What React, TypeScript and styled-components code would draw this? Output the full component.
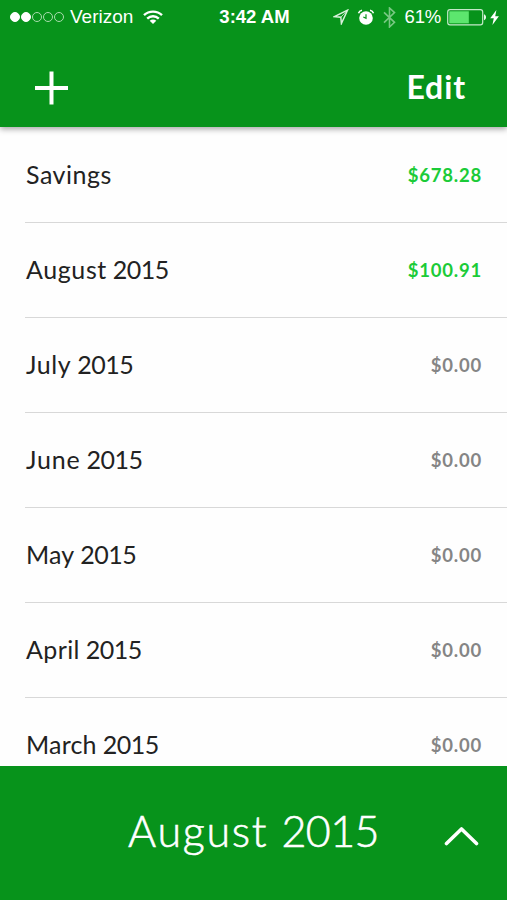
import React from "react";
import styled, { createGlobalStyle } from "styled-components";

const GREEN = "#07931b";

const GlobalStyle = createGlobalStyle`
  * { box-sizing: border-box; }
  body { margin: 0; background: #fff; }
`;

const Screen = styled.main`
  width: 507px;
  height: 900px;
  display: flex;
  flex-direction: column;
  overflow: hidden;
  background: #fefefe;
  font-family: Lato, "Noto Sans", sans-serif;
`;

const Header = styled.header`
  flex: none;
  height: 127px;
  display: flex;
  flex-direction: column;
  background: ${GREEN};
  color: #fff;
  z-index: 1;
  box-shadow: 0 2px 6px rgba(0, 0, 0, 0.36);
`;

const StatusBar = styled.div`
  height: 34px;
  display: grid;
  grid-template-columns: 1fr 74px 1fr;
  align-items: center;
  padding: 0 8px 0 10px;
  font-family: "Liberation Sans", Arial, sans-serif;
  font-size: 19px;
  line-height: 34px;
`;

const StatusGroup = styled.div<{ $end?: boolean }>`
  display: flex;
  align-items: center;
  justify-content: ${(p) => (p.$end ? "flex-end" : "flex-start")};
  white-space: nowrap;
`;

const Signal = styled.div`
  display: flex;
  gap: 1px;
  margin-right: 6px;
`;

const Dot = styled.i<{ $on: boolean }>`
  width: 10px;
  height: 10px;
  border-radius: 50%;
  border: 1px solid ${(p) => (p.$on ? "#fff" : "#a9dcae")};
  background: ${(p) => (p.$on ? "#fff" : "transparent")};
`;

const Carrier = styled.span`
  margin-right: 10px;
`;

const Clock = styled.time`
  font-size: 18.5px;
  font-weight: 700;
  text-align: center;
  white-space: nowrap;
`;

const Percent = styled.span`
  font-size: 18.5px;
  letter-spacing: -0.2px;
  margin: 0 6px 0 9px;
`;

const NavBar = styled.nav`
  height: 93px;
  display: flex;
  align-items: center;
  justify-content: space-between;
  padding: 14px 41px 0 34px;
`;

const PlainButton = styled.button`
  display: flex;
  border: 0;
  padding: 0;
  background: none;
  color: #fff;
  font: inherit;
`;

const EditButton = styled(PlainButton)`
  font-size: 32px;
  line-height: 36px;
  font-weight: 700;
  letter-spacing: 0.9px;
  padding-bottom: 2px;
`;

const List = styled.ul`
  flex: 1;
  min-height: 0;
  overflow: hidden;
  margin: 0;
  padding: 1px 0 0 25px;
  list-style: none;
`;

const Row = styled.li`
  height: 95px;
  display: flex;
  align-items: center;
  justify-content: space-between;
  padding: 0 25px 0 1px;
  border-bottom: 1px solid #d8d8d8;
`;

const Name = styled.span`
  padding-bottom: 3px;
  font-size: 25px;
  line-height: 32px;
  color: #222;
  white-space: nowrap;
`;

const Word = styled.span<{ $tracking: number }>`
  letter-spacing: ${(p) => p.$tracking}px;
`;

const Amount = styled.span<{ $positive: boolean }>`
  font-size: 18.5px;
  line-height: 24px;
  font-weight: 700;
  letter-spacing: 0.8px;
  color: ${(p) => (p.$positive ? "#1bcb38" : "#858585")};
`;

const Footer = styled.footer`
  flex: none;
  height: 134px;
  display: grid;
  grid-template-columns: 1fr auto 1fr;
  align-items: center;
  background: ${GREEN};
  color: #fff;
`;

const Current = styled.h1`
  grid-column: 2;
  margin: 0;
  padding-bottom: 4px;
  font-size: 43px;
  line-height: 52px;
  font-weight: 300;
  white-space: nowrap;
  -webkit-text-stroke: 0.6px #fff;
`;

const Expand = styled(PlainButton)`
  justify-self: end;
  padding: 6px 28px 0 0;
`;

const accounts = [
  { name: "Savings", year: "", amount: "$678.28", tracking: 0.5 },
  { name: "August", year: "2015", amount: "$100.91", tracking: 0.6 },
  { name: "July", year: "2015", amount: "$0.00", tracking: 0.6 },
  { name: "June", year: "2015", amount: "$0.00", tracking: 0.8 },
  { name: "May", year: "2015", amount: "$0.00", tracking: 0.2 },
  { name: "April", year: "2015", amount: "$0.00", tracking: 0.4 },
  { name: "March", year: "2015", amount: "$0.00", tracking: 0.2 },
];

const WifiIcon = () => (
  <svg width="20" height="15" viewBox="0 0 20 15" fill="none" stroke="#fff" strokeWidth="2.4">
    <path d="M1 5.2C6 .4 14 .4 19 5.2" />
    <path d="M4.2 8.6c3.3-3.1 8.3-3.1 11.6 0" />
    <path d="M10 14 6.7 10.8c1.9-1.6 4.7-1.6 6.6 0z" fill="#fff" stroke="none" />
  </svg>
);

const LocationIcon = () => (
  <svg width="16" height="16" viewBox="0 0 16 16" fill="none" stroke="#d9f1dc" strokeWidth="1.5" strokeLinejoin="miter">
    <path d="M14.5 1.2 1.5 7.6l6.3.7.6 6.2z" />
    <path d="M14.5 1.2 7.8 8.3" strokeWidth=".8" />
  </svg>
);

const AlarmIcon = () => (
  <svg width="18" height="17" viewBox="0 0 18 17" fill="none">
    <circle cx="9" cy="9" r="6.8" fill="#fff" />
    <path d="M1.5 4.2C2 2.5 3.2 1.5 5 1.2M16.5 4.2C16 2.5 14.8 1.5 13 1.2" stroke="#fff" strokeWidth="1.5" />
    <path d="M9 5.2v4.1L6.3 8" stroke={GREEN} strokeWidth="1.2" />
  </svg>
);

const BluetoothIcon = () => (
  <svg width="13" height="21" viewBox="0 0 13 21" fill="none" stroke="#79c883" strokeWidth="1.6">
    <path d="m1 5.3 10.5 10L6.5 20V1l5 4.6L1 15.6" />
  </svg>
);

const BatteryIcon = () => (
  <svg width="40" height="17" viewBox="0 0 40 17">
    <rect x=".7" y=".7" width="35" height="15.2" rx="2.3" fill="none" stroke="#c5e9c9" strokeWidth="1.2" />
    <rect x="2.3" y="2.3" width="19.5" height="12" fill="#5ce66e" />
    <path d="M37 5.2c2.7.8 2.7 5.2 0 6z" fill="#e9f8ea" />
  </svg>
);

const BoltIcon = () => (
  <svg width="9" height="15" viewBox="0 0 9 15" fill="#fff">
    <path d="M6.4 0 .2 8.2h3.6L2.4 15 8.9 6.3H5.2z" />
  </svg>
);

const Gap = styled.span<{ $w: number }>`
  flex: none;
  width: ${(p) => p.$w}px;
`;

export default function App() {
  return (
    <>
      <GlobalStyle />
      <Screen>
        <Header>
          <StatusBar>
            <StatusGroup>
              <Signal>
                {[true, true, false, false, false].map((on, i) => (
                  <Dot key={i} $on={on} />
                ))}
              </Signal>
              <Carrier>Verizon</Carrier>
              <WifiIcon />
            </StatusGroup>
            <Clock>3:42 AM</Clock>
            <StatusGroup $end>
              <LocationIcon />
              <Gap $w={8} />
              <AlarmIcon />
              <Gap $w={8} />
              <BluetoothIcon />
              <Percent>61%</Percent>
              <BatteryIcon />
              <Gap $w={3} />
              <BoltIcon />
            </StatusGroup>
          </StatusBar>
          <NavBar>
            <PlainButton aria-label="Add">
              <svg width="34" height="34" viewBox="0 0 34 34" stroke="#fff" strokeWidth="4">
                <path d="M1 17h33M17.5 .5v33" />
              </svg>
            </PlainButton>
            <EditButton>Edit</EditButton>
          </NavBar>
        </Header>
        <List>
          {accounts.map((a) => (
            <Row key={a.name}>
              <Name>
                <Word $tracking={a.tracking}>{a.name}</Word>
                {a.year && <Word $tracking={-0.5}>{" " + a.year}</Word>}
              </Name>
              <Amount $positive={a.amount !== "$0.00"}>{a.amount}</Amount>
            </Row>
          ))}
        </List>
        <Footer>
          <Current>
            <Word $tracking={1.7}>August </Word>
            <Word $tracking={-0.6}>2015</Word>
          </Current>
          <Expand aria-label="Expand">
            <svg width="35" height="20" viewBox="0 0 35 20" fill="none" stroke="#fff" strokeWidth="3.6" strokeLinecap="round" strokeLinejoin="round">
              <path d="M2.5 17.5 17.5 3l15 14.5" />
            </svg>
          </Expand>
        </Footer>
      </Screen>
    </>
  );
}
